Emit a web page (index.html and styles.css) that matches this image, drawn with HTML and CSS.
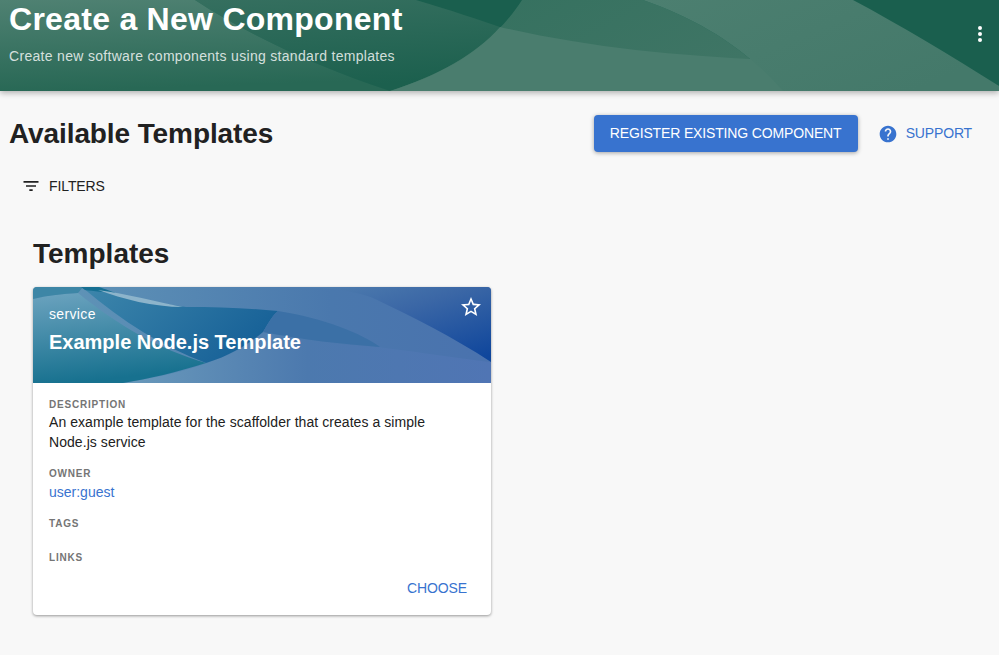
FILE: index.html
```html
<!DOCTYPE html>
<html>

<head>
    <title>Create a New Component</title>

    <link rel="stylesheet" href="styles.css">
</head>

<body>

    <header class="page-header">
        <svg class="wave" viewBox="0 0 999 91" preserveAspectRatio="none">
            <defs>
                <linearGradient id="green-left" x1="0" y1="0" x2="0.15" y2="1">
                    <stop offset="0" stop-color="#4f8172" />
                    <stop offset="1" stop-color="#286855" />
                </linearGradient>
                <linearGradient id="green-mid" x1="0" y1="0" x2="0.2" y2="1">
                    <stop offset="0" stop-color="#356f5f" />
                    <stop offset="1" stop-color="#1c604e" />
                </linearGradient>
                <linearGradient id="green-top" x1="0" y1="0" x2="1" y2="0.4">
                    <stop offset="0" stop-color="#33705e" />
                    <stop offset="1" stop-color="#3f7565" />
                </linearGradient>
                <linearGradient id="green-right" x1="0" y1="0" x2="1" y2="0.6">
                    <stop offset="0" stop-color="#4c7f70" />
                    <stop offset="1" stop-color="#44796a" />
                </linearGradient>
            </defs>
            <rect width="999" height="91" fill="#1a5f4e" />
            <path d="M195 0H440C478 14 495 22 500 27C480 55 440 75 390 91C320 68 250 36 195 0Z" fill="url(#green-mid)" />
            <path d="M0 0H195C250 36 320 68 390 91H0Z" fill="url(#green-left)" />
            <path d="M416 0H522C514 12 508 20 500 27C480 20 450 10 416 0Z" fill="#1a5f4e" />
            <path d="M522 0H643C700 20 745 48 783 91H390C440 75 490 50 522 0Z" fill="url(#green-top)" />
            <path d="M500 27C590 48 680 56 770 60C850 64 930 68 999 86V91H390C440 75 475 55 500 27Z" fill="#4a7d6e" />
            <path d="M643 0H853C900 25 950 55 999 86V91H783C745 48 700 20 643 0Z" fill="url(#green-right)" />
        </svg>
        <div class="header-text">
            <h1>Create a New Component</h1>
            <p>Create new software components using standard templates</p>
        </div>
        <button class="dots" aria-label="more">
            <span></span><span></span><span></span>
        </button>
    </header>

    <main class="content">

        <div class="content-header">
            <h2>Available Templates</h2>
            <div class="actions">
                <a class="btn-primary">Register Existing Component</a>
                <a class="support">
                    <svg viewBox="0 0 24 24" width="20" height="20">
                        <path fill="#3873cf" d="M12 2C6.48 2 2 6.48 2 12s4.48 10 10 10 10-4.48 10-10S17.52 2 12 2zm1 17h-2v-2h2v2zm2.07-7.75l-.9.92C13.45 12.9 13 13.5 13 15h-2v-.5c0-1.1.45-2.1 1.17-2.83l1.24-1.26c.37-.36.59-.86.59-1.41 0-1.1-.9-2-2-2s-2 .9-2 2H8c0-2.21 1.79-4 4-4s4 1.79 4 4c0 .88-.36 1.68-.93 2.25z" />
                    </svg>
                    Support
                </a>
            </div>
        </div>

        <div class="filters">
            <svg viewBox="0 0 24 24" width="20" height="20">
                <path fill="#212121" d="M10 18h4v-2h-4v2zM3 6v2h18V6H3zm3 7h12v-2H6v2z" />
            </svg>
            Filters
        </div>

        <section class="templates">
            <h3>Templates</h3>

            <div class="card">
                <div class="card-head">
                    <svg class="wave" viewBox="0 0 458 96" preserveAspectRatio="none">
                        <defs>
                            <linearGradient id="blue-top" x1="0" y1="0" x2="1" y2="0">
                                <stop offset="0" stop-color="#6297b8" />
                                <stop offset="0.65" stop-color="#4a78ad" />
                                <stop offset="1" stop-color="#4a72ae" />
                            </linearGradient>
                            <linearGradient id="blue-corner" x1="0" y1="0" x2="0.9" y2="1">
                                <stop offset="0" stop-color="#5382b0" />
                                <stop offset="0.45" stop-color="#3b67a6" />
                                <stop offset="1" stop-color="#0f469c" />
                            </linearGradient>
                            <linearGradient id="blue-band" x1="0" y1="0" x2="1" y2="0">
                                <stop offset="0" stop-color="#6a9abb" />
                                <stop offset="0.5" stop-color="#4c79ae" />
                                <stop offset="1" stop-color="#5075b4" />
                            </linearGradient>
                            <linearGradient id="blue-dark" x1="0" y1="0" x2="1" y2="0.4">
                                <stop offset="0" stop-color="#3d86ab" />
                                <stop offset="1" stop-color="#186298" />
                            </linearGradient>
                            <linearGradient id="blue-left" x1="0" y1="0" x2="0.2" y2="1">
                                <stop offset="0" stop-color="#6ca3bf" />
                                <stop offset="1" stop-color="#17718f" />
                            </linearGradient>
                        </defs>
                        <rect width="458" height="96" fill="url(#blue-top)" />
                        <path d="M250 0H458V75C420 50 380 30 340 11C320 3 290 0 250 0Z" fill="url(#blue-corner)" />
                        <path d="M90 96C130 90 200 75 230 45C260 52 300 57 345 60C385 65 430 72 458 75V96Z" fill="url(#blue-band)" />
                        <path d="M50 1C90 35 130 60 173 76C200 68 218 55 230 45C236 35 240 28 245 24C215 21 185 20 153 20C120 16 90 8 62 2Z" fill="url(#blue-dark)" />
                        <path d="M245 24C290 31 330 47 347 60C310 57 270 53 230 45C236 35 240 28 245 24Z" fill="#3b70a6" />
                        <path d="M0 12C17 8 30 7 45 6C85 38 125 62 173 76C145 85 115 92 90 96H0Z" fill="url(#blue-left)" />
                        <path d="M0 0H50L45 6C30 7 15 8 0 12Z" fill="#3d86a6" />
                        <path d="M48 0H66C72 2 80 5 85 7C72 5 60 4 52 3Z" fill="#166f92" />
                        <path d="M65 3C90 6 125 15 150 20C120 20 90 12 65 3Z" fill="#8db4cb" />
                    </svg>
                    <svg class="star" viewBox="0 0 24 24" width="24" height="24">
                        <path fill="#fff" d="M22 9.24l-7.19-.62L12 2 9.19 8.63 2 9.24l5.46 4.73L5.82 21 12 17.27 18.18 21l-1.63-7.03L22 9.24zM12 15.4l-3.76 2.27 1-4.28-3.32-2.88 4.38-.38L12 6.1l1.71 4.04 4.38.38-3.32 2.88 1 4.28L12 15.4z" />
                    </svg>
                    <div class="card-head-text">
                        <div class="card-type">service</div>
                        <div class="card-title">Example Node.js Template</div>
                    </div>
                </div>

                <div class="card-body">
                    <div class="field">
                        <h4>Description</h4>
                        <p>An example template for the scaffolder that creates a simple Node.js service</p>
                    </div>
                    <div class="field">
                        <h4>Owner</h4>
                        <a class="owner">user:guest</a>
                    </div>
                    <div class="field field-empty">
                        <h4>Tags</h4>
                    </div>
                    <div class="field field-empty">
                        <h4>Links</h4>
                    </div>
                </div>

                <div class="card-actions">
                    <a class="choose">Choose</a>
                </div>
            </div>
        </section>

    </main>

</body>

</html>
```

FILE: styles.css
```css
* {
    margin: 0;
    padding: 0;
    box-sizing: border-box;
}

html,
body {
    width: 100%;
    height: 100%;
    overflow: hidden;
}

body {
    font-family: "Liberation Sans", Arial, sans-serif;
    font-size: 14px;
    color: #212121;
    background-color: #f8f8f8;
}

.wave {
    position: absolute;
    top: 0;
    left: 0;
    width: 100%;
    height: 100%;
}

.page-header {
    position: relative;
    height: 91px;
    display: flex;
    justify-content: space-between;
    align-items: flex-start;
    padding: 0 9px;
    color: #fff;
    box-shadow: 0 2px 6px rgba(0, 0, 0, 0.3);
}

.header-text {
    position: relative;
}

.page-header h1 {
    font-size: 32px;
    line-height: 38px;
    font-weight: 700;
    letter-spacing: 0.27px;
}

.page-header p {
    margin-top: 8px;
    font-size: 14px;
    line-height: 20px;
    letter-spacing: 0.31px;
    color: rgba(255, 255, 255, 0.8);
}

.dots {
    position: relative;
    display: flex;
    flex-direction: column;
    gap: 2px;
    margin: 26px 8px 0 0;
    border: none;
    background: none;
}

.dots span {
    display: block;
    width: 4px;
    height: 4px;
    border-radius: 50%;
    background-color: #fff;
}

.content {
    padding: 24px 27px 0 9px;
}

.content-header {
    display: flex;
    justify-content: space-between;
    align-items: center;
}

.content-header h2 {
    font-size: 28px;
    line-height: 37px;
    font-weight: 700;
    letter-spacing: -0.1px;
}

.actions {
    display: flex;
    align-items: center;
    gap: 20px;
}

.btn-primary {
    display: block;
    height: 37px;
    line-height: 37px;
    width: 264px;
    text-align: center;
    font-size: 14px;
    letter-spacing: -0.15px;
    text-transform: uppercase;
    color: #fff;
    background-color: #3873cf;
    border-radius: 4px;
    box-shadow: 0 1px 4px rgba(0, 0, 0, 0.35);
}

.support {
    display: flex;
    align-items: center;
    gap: 8px;
    font-size: 14px;
    line-height: 19px;
    letter-spacing: -0.15px;
    text-transform: uppercase;
    color: #3873cf;
}

.filters {
    display: flex;
    align-items: center;
    gap: 8px;
    margin-top: 22px;
    padding-left: 12px;
    height: 24px;
    font-size: 14px;
    letter-spacing: -0.1px;
    text-transform: uppercase;
}

.templates {
    margin-top: 39px;
    padding-left: 24px;
}

.templates h3 {
    font-size: 28px;
    line-height: 34px;
    font-weight: 700;
}

.card {
    width: 458px;
    margin-top: 16px;
    background-color: #fff;
    border-radius: 4px;
    overflow: hidden;
    box-shadow: 0 1px 3px rgba(0, 0, 0, 0.4);
}

.card-head {
    position: relative;
    height: 96px;
    color: #fff;
}

.card-head-text {
    position: relative;
    padding: 19px 16px 0;
}

.card-type {
    font-size: 14px;
    line-height: 17px;
    letter-spacing: 0.35px;
}

.card-title {
    margin-top: 6px;
    font-size: 20px;
    line-height: 26px;
    font-weight: 700;
}

.star {
    position: absolute;
    top: 8px;
    right: 8px;
}

.card-body {
    padding: 17px 16px 0;
}

.field {
    margin-bottom: 17px;
}

.field:last-child {
    margin-bottom: 8px;
}

.field h4 {
    font-size: 10px;
    line-height: 10px;
    font-weight: 700;
    letter-spacing: 0.8px;
    text-transform: uppercase;
    color: #757575;
}

.field p {
    margin-top: 2px;
    font-size: 14px;
    line-height: 20px;
    letter-spacing: 0.06px;
}

.owner {
    display: block;
    margin-top: 3px;
    font-size: 14px;
    line-height: 20px;
    color: #3873cf;
}

.field-empty {
    height: 17px;
}

.card-actions {
    display: flex;
    justify-content: flex-end;
    padding: 0 24px 17px;
}

.choose {
    font-size: 14px;
    line-height: 20px;
    letter-spacing: -0.1px;
    text-transform: uppercase;
    color: #3873cf;
}
```
